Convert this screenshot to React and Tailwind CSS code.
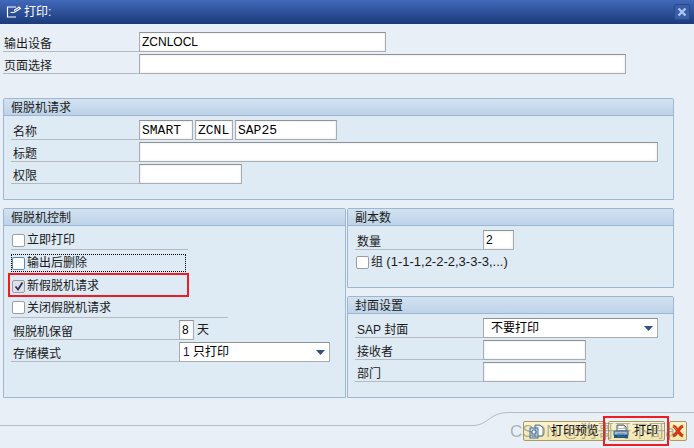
const font = { fontFamily: '"Liberation Sans", "Noto Sans CJK SC", sans-serif' };

function Input({ className = '', mono = false, children }) {
  return (
    <div
      className={`h-5 shrink-0 bg-white border border-[#a9adaf] border-t-[#8f9395] shadow-[inset_0_0_2px_#d8d8d8] px-[2px] text-[12px] text-black whitespace-nowrap overflow-hidden ${mono ? 'font-["Liberation_Mono"] text-[13px] leading-[20px]' : 'leading-[18px]'} ${className}`}
    >
      {children}
    </div>
  );
}

function Label({ children, className = '' }) {
  return (
    <div className={`h-5 shrink-0 border-b border-[#b4babf] pl-[2px] text-[12px] leading-[24px] text-[#1a1a1a] whitespace-nowrap ${className}`}>
      {children}
    </div>
  );
}

function Arrow() {
  return (
    <svg width="9" height="5" viewBox="0 0 9 5" className="shrink-0">
      <path d="M0 0h9L4.5 5z" fill="#2f4f7f" />
    </svg>
  );
}

function Select({ className = '', children }) {
  return (
    <div className={`h-5 shrink-0 flex items-center justify-between bg-white border border-[#a9adaf] border-t-[#8f9395] pr-[4px] text-[12px] leading-[17px] text-black whitespace-nowrap ${className}`}>
      {children}
      <Arrow />
    </div>
  );
}

function Check({ checked, focused }) {
  return (
    <div className={`w-[13px] h-[13px] shrink-0 rounded-[2px] border flex items-center justify-center ${focused ? 'border-[#5b86b8]' : 'border-[#9a9ea2]'} ${checked ? 'bg-[#dfe0e8]' : 'bg-white'}`}>
      {checked && (
        <svg width="10" height="10" viewBox="0 0 10 10">
          <path d="M1.5 5.5L4 8.5L8.5 1.5" fill="none" stroke="#2a3560" strokeWidth="1.8" />
        </svg>
      )}
    </div>
  );
}

function Section({ title, className = '', children }) {
  return (
    <div className={`border border-[#9db6d1] rounded-t-[2px] bg-[#deeaf4] ${className}`}>
      <div className="h-[17px] bg-gradient-to-b from-[#d3e2f0] to-[#bdd3e8] border-b border-[#9db6d1] pl-[7px] text-[12px] leading-[18px] text-[#1a1a1a] whitespace-nowrap">
        {title}
      </div>
      {children}
    </div>
  );
}

function PreviewIcon() {
  return (
    <svg width="15" height="15" viewBox="0 0 15 15" className="shrink-0">
      <path d="M6 1h5l3 3v8H6z" fill="#fff" stroke="#5f86a8" />
      <rect x="1" y="4" width="8" height="10" fill="#cfe0ee" stroke="#3f6f97" />
      <circle cx="5" cy="8" r="2.2" fill="#f4f8fb" stroke="#2f6a99" />
      <path d="M3 12h4" stroke="#2f6a99" />
    </svg>
  );
}

function PrinterIcon() {
  return (
    <svg width="16" height="15" viewBox="0 0 16 15" className="shrink-0">
      <path d="M4 1h7l2 2v4H4z" fill="#fff" stroke="#4a5f70" />
      <rect x="1" y="7" width="14" height="4" fill="#9cc3dd" stroke="#2f5f85" />
      <rect x="1" y="11" width="14" height="3" fill="#14588c" />
    </svg>
  );
}

function CancelIcon() {
  return (
    <svg width="14" height="14" viewBox="0 0 14 14">
      <path d="M2 2C5 3 5.5 5 7 7C5.5 9 5 11 2 12M12 2C9 3 8.5 5 7 7C8.5 9 9 11 12 12" fill="none" stroke="#d23c12" strokeWidth="3.4" />
      <path d="M2 2.5C4 3.5 5 5 5.5 6" fill="none" stroke="#f28a4a" />
    </svg>
  );
}

function FooterButton({ className = '', children }) {
  return (
    <div className={`h-5 flex items-center rounded-[2px] border border-[#a99b62] bg-gradient-to-b from-[#fbf3cd] to-[#f3e7ae] text-[12px] text-black whitespace-nowrap ${className}`}>
      {children}
    </div>
  );
}

export default function App() {
  return (
    <div style={font} className="relative w-[694px] h-[448px] overflow-hidden bg-[#e8eff7]">
      {/* title bar */}
      <div className="h-6 flex items-center justify-between bg-gradient-to-b from-[#4269bb] to-[#1b3a7a] pl-[6px] pr-[3px]">
        <div className="flex items-center gap-[2px] text-white text-[12px]">
          <svg width="16" height="14" viewBox="0 0 16 14" fill="none" stroke="#fff" strokeWidth="1.2">
            <path d="M10 2H1.5V12H10M4.5 7.5H8L14.5 3.5L13 2L8 5.5" />
          </svg>
          <span>打印:</span>
        </div>
        <div className="w-4 h-4 rounded-[2px] border border-[#2a4a8c] bg-[#3a5da8] flex items-center justify-center mr-px">
          <svg width="10" height="10" viewBox="0 0 10 10">
            <path d="M1.5 1.5L8.5 8.5M8.5 1.5L1.5 8.5" stroke="#a9c6f5" strokeWidth="2.4" />
          </svg>
        </div>
      </div>

      <div className="pl-[3px] pt-2">
        <div className="flex">
          <Label className="w-[136px] !pl-px">输出设备</Label>
          <Input className="w-[247px] text-[11px]">ZCNLOCL</Input>
        </div>
        <div className="flex mt-[2px]">
          <Label className="w-[136px] !pl-px">页面选择</Label>
          <Input className="w-[487px]" />
        </div>

        <Section title="假脱机请求" className="w-[671px] h-[102px] mt-[24px]">
          <div className="pl-[7px] pt-[4px]">
            <div className="flex">
              <Label className="w-[128px]">名称</Label>
              <div className="flex gap-[2px]">
                <Input mono className="w-[54px]">SMART</Input>
                <Input mono className="w-[38px]">ZCNL</Input>
                <Input mono className="w-[102px]">SAP25</Input>
              </div>
            </div>
            <div className="flex mt-[2px]">
              <Label className="w-[128px]">标题</Label>
              <Input className="w-[519px]" />
            </div>
            <div className="flex mt-[2px]">
              <Label className="w-[128px]">权限</Label>
              <Input className="w-[103px]" />
            </div>
          </div>
        </Section>

        <div className="flex mt-[8px] gap-px">
          <Section title="假脱机控制" className="w-[343px] h-[190px]">
            <div className="pl-[7px] pt-[4px]">
              <div className="w-[177px] h-5 flex items-center gap-[2px] border-b border-[#b4babf] pl-px pt-px text-[12px] text-[#1a1a1a]">
                <Check />
                <span>立即打印</span>
              </div>
              <div className="w-[175px] h-[18px] mt-[4px] flex items-center gap-[2px] border border-dotted border-black text-[12px] text-[#1a1a1a]">
                <Check focused />
                <span>输出后删除</span>
              </div>
              <div className="w-[175px] h-5 mt-[4px] flex items-center gap-[2px] pl-px text-[12px] text-[#1a1a1a]">
                <Check checked />
                <span>新假脱机请求</span>
              </div>
              <div className="w-[217px] h-5 mt-[2px] flex items-center gap-[2px] border-b border-[#b4babf] pl-px text-[12px] text-[#1a1a1a]">
                <Check />
                <span>关闭假脱机请求</span>
              </div>
              <div className="flex mt-[2px]">
                <Label className="w-[168px]">假脱机保留</Label>
                <Input className="w-[15px]">8</Input>
                <span className="pl-[3px] text-[12px] leading-[20px] text-[#1a1a1a]">天</span>
              </div>
              <div className="flex mt-[2px]">
                <Label className="w-[168px]">存储模式</Label>
                <Select className="w-[151px] pl-[3px]">
                  <span><span className="text-[#3a0a4a]">1</span> 只打印</span>
                </Select>
              </div>
            </div>
          </Section>

          <div className="flex flex-col gap-[8px]">
            <Section title="副本数" className="w-[327px] h-[80px]">
              <div className="pl-[7px] pt-[4px]">
                <div className="flex">
                  <Label className="w-[128px]">数量</Label>
                  <Input className="w-[31px]">2</Input>
                </div>
                <div className="h-5 mt-[2px] flex items-center gap-[2px] pl-px text-[12px] text-[#1a1a1a]">
                  <Check />
                  <span>组 <span className="text-[13px]">(1-1-1,2-2-2,3-3-3,...)</span></span>
                </div>
              </div>
            </Section>
            <Section title="封面设置" className="w-[327px] h-[102px]">
              <div className="pl-[7px] pt-[4px]">
                <div className="flex">
                  <Label className="w-[128px]">SAP 封面</Label>
                  <Select className="w-[175px] pl-[7px]"><span>不要打印</span></Select>
                </div>
                <div className="flex mt-[2px]">
                  <Label className="w-[128px]">接收者</Label>
                  <Input className="w-[103px]" />
                </div>
                <div className="flex mt-[2px]">
                  <Label className="w-[128px]">部门</Label>
                  <Input className="w-[103px]" />
                </div>
              </div>
            </Section>
          </div>
        </div>
      </div>

      {/* footer */}
      <svg width="694" height="48" viewBox="0 0 694 48" className="absolute left-0 bottom-0" fill="none">
        <path d="M0 25.5H474C488 25 490 12.5 508 12.5H694" stroke="#b4bcc8" />
      </svg>
      <div className="absolute left-[523px] top-[421px] flex">
        <FooterButton className="w-[83px] pl-[5px] gap-[7px]"><PreviewIcon />打印预览</FooterButton>
        <FooterButton className="w-[57px] ml-[2px] pl-[4px] gap-[5px]"><PrinterIcon />打印</FooterButton>
        <FooterButton className="w-[18px] ml-[4px] justify-center"><CancelIcon /></FooterButton>
      </div>

      {/* red annotations */}
      <div className="absolute left-[8px] top-[273px] w-[181px] h-[24px] border-2 border-[#ee1c25]" />
      <div className="absolute left-[603px] top-[416px] w-[66px] h-[30px] border-2 border-[#ee1c25]" />

      {/* watermark */}
      <div className="absolute left-[510px] top-[419px] text-[17px] text-[#6f6f6f]/50 whitespace-nowrap">CSDN @狗哥哥不哥a</div>
    </div>
  );
}
